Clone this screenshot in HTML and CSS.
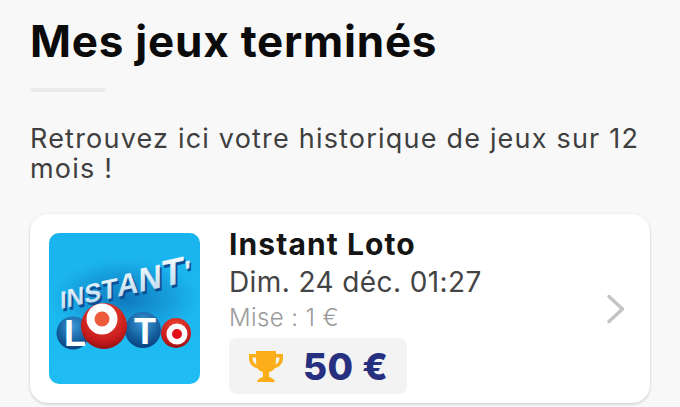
FILE: index.html
```html
<!DOCTYPE html>
<html lang="fr">
<head>
<meta charset="utf-8">
<title>Mes jeux terminés</title>
<link rel="stylesheet" href="styles.css">
</head>
<body>
<main class="page">
  <h1 class="title">Mes jeux terminés</h1>
  <div class="rule"></div>
  <p class="intro">Retrouvez ici votre historique de jeux sur 12 mois !</p>
  <article class="card">
    <svg class="logo" viewBox="0 0 151 151" aria-label="Instant Loto">
      <defs>
        <linearGradient id="sky" x1="0" y1="0" x2="0" y2="1">
          <stop offset="0" stop-color="#19b3ee"/>
          <stop offset="1" stop-color="#1fbdf4"/>
        </linearGradient>
        <radialGradient id="glow" cx="0.5" cy="0.5" r="0.5">
          <stop offset="0" stop-color="#0b5ea6" stop-opacity=".7"/>
          <stop offset="0.65" stop-color="#0b6cb0" stop-opacity=".3"/>
          <stop offset="1" stop-color="#0f86c8" stop-opacity="0"/>
        </radialGradient>
        <radialGradient id="blue" cx="0.5" cy="0.3" r="0.75">
          <stop offset="0" stop-color="#3d97d6"/>
          <stop offset="0.6" stop-color="#14609f"/>
          <stop offset="1" stop-color="#0a3a78"/>
        </radialGradient>
        <radialGradient id="red" cx="0.5" cy="0.3" r="0.75">
          <stop offset="0" stop-color="#ee4a35"/>
          <stop offset="0.7" stop-color="#c81c1c"/>
          <stop offset="1" stop-color="#860c10"/>
        </radialGradient>
        <linearGradient id="letters" x1="0" y1="0" x2="0" y2="1">
          <stop offset="0" stop-color="#ffffff"/>
          <stop offset="1" stop-color="#b5d6ee"/>
        </linearGradient>
      </defs>
      <rect width="151" height="151" rx="10" fill="url(#sky)"/>
      <ellipse cx="76" cy="66" rx="76" ry="42" fill="url(#glow)"/>
      <g transform="translate(11 76) rotate(-12) skewX(-12)">
        <text class="logo-shadow" x="2" y="3"><tspan font-size="24">I</tspan><tspan font-size="25">N</tspan><tspan font-size="26">S</tspan><tspan font-size="27">T</tspan><tspan font-size="30">A</tspan><tspan font-size="33">N</tspan><tspan font-size="37">T</tspan><tspan font-size="30">'</tspan></text>
        <text class="logo-word" x="0" y="0"><tspan font-size="24">I</tspan><tspan font-size="25">N</tspan><tspan font-size="26">S</tspan><tspan font-size="27">T</tspan><tspan font-size="30">A</tspan><tspan font-size="33">N</tspan><tspan font-size="37">T</tspan><tspan font-size="30">'</tspan></text>
      </g>
      <circle cx="24" cy="100" r="16.500" fill="url(#blue)"/>
      <text class="ball-letter" x="26" y="113" font-size="36">L</text>
      <circle cx="127" cy="100" r="15" fill="url(#red)"/>
      <circle cx="128" cy="101" r="10.500" fill="#fff"/>
      <circle cx="128" cy="101" r="5" fill="#e2101a"/>
      <circle cx="94" cy="97" r="18" fill="url(#blue)"/>
      <text class="ball-letter" x="96" y="111" font-size="36">T</text>
      <circle cx="55" cy="93" r="23" fill="url(#red)"/>
      <circle cx="53" cy="86" r="15.500" fill="#fff"/>
      <circle cx="53" cy="86" r="7.500" fill="#ee5a3c"/>
    </svg>
    <div class="info">
      <h2 class="game">Instant Loto</h2>
      <p class="date">Dim. 24 déc. 01:27</p>
      <p class="stake">Mise : 1 €</p>
      <div class="win">
        <svg class="trophy" viewBox="0 0 36 33" aria-hidden="true">
          <path d="M8 1h20v3h7v4c0 5-3 9-8 10-1.500 2-3.500 3.500-6 4v5c2 .5 5 1.500 6 5H9c1-3.500 4-4.500 6-5v-5c-2.500-.5-4.500-2-6-4-5-1-8-5-8-10V4h7zM4.500 7.500v.5c0 3 1.500 5.500 4 6.500-.3-2-.5-4.500-.5-7zm27 0H28c0 2.500-.2 5-.5 7 2.500-1 4-3.500 4-6.500z" fill="#fbae17" fill-rule="evenodd"/>
        </svg>
        <span class="amount">50 €</span>
      </div>
    </div>
    <svg class="chevron" viewBox="0 0 20 30" aria-hidden="true">
      <path d="M3 2.500 16.500 15 3 27.500" fill="none" stroke="#c4c4c4" stroke-width="3.500" stroke-linecap="round" stroke-linejoin="round"/>
    </svg>
  </article>
</main>
</body>
</html>
```
FILE: styles.css
```css
* { box-sizing: border-box; }
html, body { margin: 0; height: 100%; }
body {
  background: #f8f8f8;
  font-family: Inter, "Liberation Sans", sans-serif;
  overflow: hidden;
}
.page { padding: 13px 30px 0; }
.title {
  margin: 0;
  font-size: 44px;
  line-height: 56px;
  font-weight: 700;
  color: #0b0b0b;
  letter-spacing: 0.77px;
}
.rule {
  width: 76px;
  height: 4px;
  margin-top: 19px;
  background: #ebebeb;
  border-radius: 2px;
}
.intro {
  margin: 32px 0 0;
  font-size: 27px;
  line-height: 30px;
  color: #3f3f3f;
  letter-spacing: 1.2px;
}
.card {
  display: flex;
  align-items: center;
  width: 620px;
  height: 189px;
  margin-top: 30px;
  padding: 0 24px 0 19px;
  background: #fff;
  border-radius: 18px;
  box-shadow: 0 1px 3px rgba(0, 0, 0, .2);
}
.logo { flex: none; width: 151px; height: 151px; }
.logo-word, .logo-shadow {
  font-family: "Liberation Sans", sans-serif;
  font-weight: 700;
}
.logo-word { fill: url(#letters); }
.logo-shadow { fill: #0d4f95; }
.ball-letter {
  font-family: "Liberation Sans", sans-serif;
  font-weight: 700;
  fill: #fff;
  text-anchor: middle;
}
.info { flex: 1; margin-left: 29px; min-width: 0; padding-top: 4px; }
.game {
  margin: 0;
  font-size: 30px;
  line-height: 34px;
  font-weight: 700;
  color: #151515;
  letter-spacing: 1.1px;
}
.date {
  margin: 5px 0 0;
  font-size: 28px;
  line-height: 32px;
  color: #444;
  letter-spacing: 0.4px;
}
.stake {
  margin: 6px 0 0;
  font-size: 24px;
  line-height: 28px;
  font-weight: 300;
  color: #9a9a9a;
  letter-spacing: 0.4px;
}
.win {
  display: flex;
  align-items: center;
  gap: 19px;
  width: 178px;
  height: 56px;
  margin-top: 6px;
  padding-left: 19px;
  background: #f3f3f3;
  border-radius: 8px;
}
.trophy { width: 36px; height: 33px; flex: none; }
.amount {
  font-size: 37px;
  font-weight: 800;
  color: #27307f;
  letter-spacing: 0.5px;
}
.chevron { flex: none; width: 20px; height: 30px; }
```
